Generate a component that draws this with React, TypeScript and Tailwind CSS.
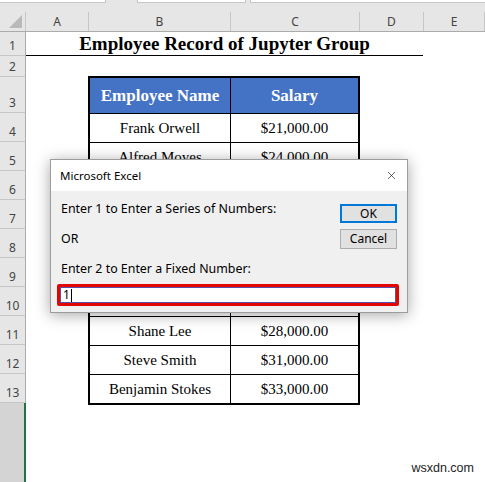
import { X } from 'lucide-react';

const COLUMNS = [
  { label: 'A', width: 'w-[63px]' },
  { label: 'B', width: 'w-[142px]' },
  { label: 'C', width: 'w-[129px]' },
  { label: 'D', width: 'w-[64px]' },
  { label: 'E', width: 'flex-1' },
];

const ROW_HEADERS = [
  { n: 1, h: 'h-[24px]' },
  { n: 2, h: 'h-[21px]' },
  { n: 3, h: 'h-[36px]' },
  { n: 4, h: 'h-[29px]' },
  { n: 5, h: 'h-[29px]' },
  { n: 6, h: 'h-[29px]' },
  { n: 7, h: 'h-[29px]' },
  { n: 8, h: 'h-[29px]' },
  { n: 9, h: 'h-[29px]' },
  { n: 10, h: 'h-[29px]' },
  { n: 11, h: 'h-[29px]' },
  { n: 12, h: 'h-[29px]' },
  { n: 13, h: 'h-[29px]' },
];

// rows 6-10 sit under the input box, so their values never show
const EMPLOYEES = [
  { id: 4, name: 'Frank Orwell', salary: '$21,000.00' },
  { id: 5, name: 'Alfred Moyes', salary: '$24,000.00' },
  { id: 6, name: '', salary: '' },
  { id: 7, name: '', salary: '' },
  { id: 8, name: '', salary: '' },
  { id: 9, name: '', salary: '' },
  { id: 10, name: '', salary: '' },
  { id: 11, name: 'Shane Lee', salary: '$28,000.00' },
  { id: 12, name: 'Steve Smith', salary: '$31,000.00' },
  { id: 13, name: 'Benjamin Stokes', salary: '$33,000.00' },
];

const uiFont = "font-['Noto_Sans',sans-serif]";
const serif = "font-['Liberation_Serif','Times_New_Roman',serif]";

function SheetChrome() {
  return (
    <>
      <div className="flex h-[12px] items-start bg-[#e6e6e6]">
        <div className="h-[3px] w-[106px] border-b border-r border-[#c6c6c6] bg-white" />
        <div className="ml-[31px] h-[3px] w-[109px] border-b border-x border-[#c6c6c6] bg-white" />
        <div className="ml-[4px] h-[3px] flex-1 border-b border-l border-[#c6c6c6] bg-white" />
      </div>
      <div className={`flex h-[20px] border-b border-[#ababab] bg-[#e6e6e6] text-[12px] text-[#444] ${uiFont}`}>
        <div className="relative w-[26px] border-r border-[#c6c6c6]">
          <svg className="absolute bottom-[3px] right-[3px]" width="13" height="13" viewBox="0 0 13 13">
            <polygon points="13,0 13,13 0,13" fill="#b9b9b9" />
          </svg>
        </div>
        {COLUMNS.map((col) => (
          <div
            key={col.label}
            className={`flex items-center justify-center border-r border-[#c6c6c6] leading-none ${col.width}`}
          >
            {col.label}
          </div>
        ))}
      </div>
    </>
  );
}

function RowHeaders() {
  return (
    <div className={`flex w-[26px] flex-col text-[12px] text-[#444] ${uiFont}`}>
      {ROW_HEADERS.map((row) => (
        <div
          key={row.n}
          className={`flex items-end justify-center border-b border-r border-b-[#c6c6c6] border-r-[#ababab] bg-[#e6e6e6] pb-[3px] leading-none ${row.h}`}
        >
          {row.n}
        </div>
      ))}
      <div className="flex-1 border-r-2 border-[#217346] bg-[#d4d4d4]" />
    </div>
  );
}

function EmployeeTable() {
  return (
    <div className={`ml-[62px] w-[272px] border-2 border-black ${serif}`}>
      <div className="grid h-[36px] grid-cols-[141px_1fr] border-b border-black bg-[#4472c4] text-[17px] font-bold text-white">
        <div className="flex items-center justify-center border-r border-black">Employee Name</div>
        <div className="flex items-center justify-center">Salary</div>
      </div>
      {EMPLOYEES.map((emp, i) => (
        <div
          key={emp.id}
          className={`grid grid-cols-[141px_1fr] text-[15px] font-normal text-black ${i === EMPLOYEES.length - 1 ? 'h-[28px]' : 'h-[29px] border-b border-black'}`}
        >
          <div className="flex items-center justify-center border-r border-black">{emp.name}</div>
          <div className="flex items-center justify-center">{emp.salary}</div>
        </div>
      ))}
    </div>
  );
}

function InputDialog() {
  return (
    <div
      className={`absolute left-[50px] top-[159px] flex h-[154px] w-[358px] flex-col border border-[#9c9c9c] shadow-[0_2px_14px_rgba(0,0,0,0.35)] ${uiFont}`}
    >
      <div className="flex h-[31px] items-center justify-between bg-white pl-[9px] pr-[9px] text-[11.5px] text-black">
        <span>Microsoft Excel</span>
        <X className="size-[13px]" strokeWidth={1.1} aria-hidden="true" />
      </div>
      <div className="flex flex-1 flex-col bg-[#f0f0f0] pl-[6px] pr-[8px] pt-[10px] text-[12.4px] text-black">
        <div className="flex">
          <div className="flex-1 pl-[4px] leading-[16px]">
            <p className="h-[30px]">Enter 1 to Enter a Series of Numbers:</p>
            <p className="h-[30px]">OR</p>
            <p className="h-[16px]">Enter 2 to Enter a Fixed Number:</p>
          </div>
          <div className="mr-[2px] flex w-[57px] flex-col gap-[6px] pt-[3px] text-[12px]">
            <button
              type="button"
              className="flex h-[19px] items-center justify-center border-2 border-[#0078d7] bg-[#e1e1e1] leading-none"
            >
              OK
            </button>
            <button
              type="button"
              className="flex h-[20px] items-center justify-center border border-[#adadad] bg-[#e1e1e1] leading-none"
            >
              Cancel
            </button>
          </div>
        </div>
        <div className="mt-[7px] flex h-[22px] items-center rounded-[2px] border-[3px] border-[#e10600] bg-white pl-[3px] text-[12px] shadow-[inset_0_0_0_1px_#5b4fa8]">
          <span className="leading-none">1</span>
          <span className="ml-px h-[13px] w-px bg-black" />
        </div>
      </div>
    </div>
  );
}

export default function App() {
  return (
    <div className="relative flex h-[482px] w-[485px] flex-col overflow-hidden bg-white">
      <SheetChrome />
      <div className="flex flex-1">
        <RowHeaders />
        <div className="flex flex-1 flex-col">
          <div
            className={`flex h-[24px] w-[397px] items-center justify-center border-b border-black pt-px text-[19px] font-bold text-black ${serif}`}
          >
            Employee Record of Jupyter Group
          </div>
          <div className="h-[20px]" />
          <EmployeeTable />
        </div>
      </div>
      <InputDialog />
      <span className="absolute bottom-[4px] right-[11px] font-['Liberation_Sans',Arial,sans-serif] text-[12.5px] text-[#222]">
        wsxdn.com
      </span>
    </div>
  );
}
